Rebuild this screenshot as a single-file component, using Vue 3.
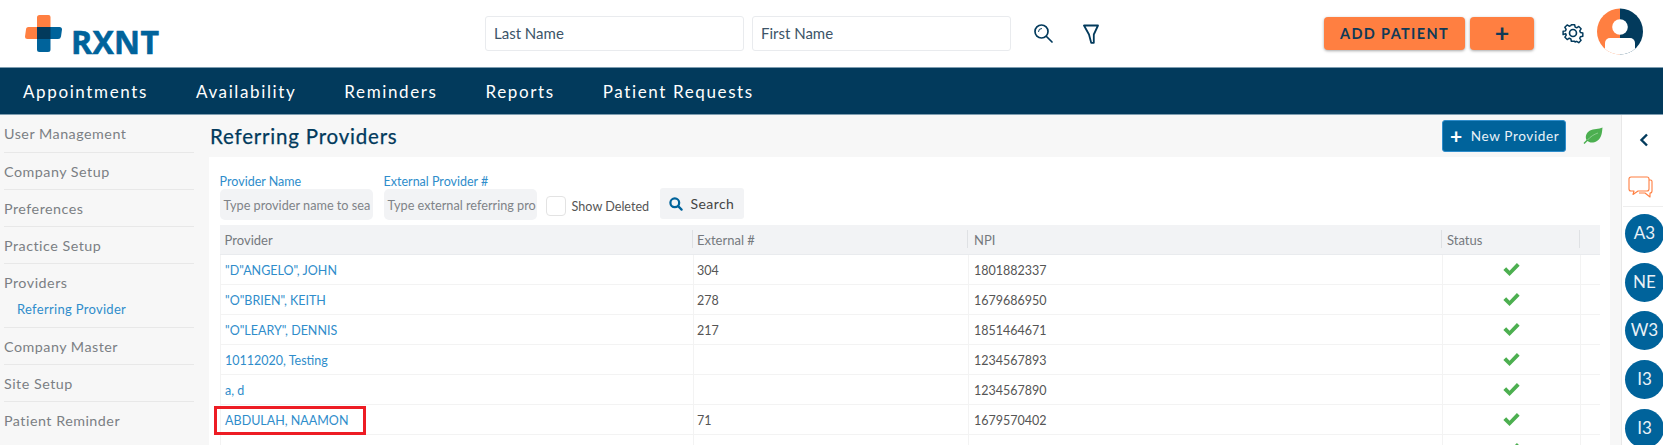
<script setup>
const navItems = [
  { label: 'Appointments', cls: 'n1' },
  { label: 'Availability', cls: 'n2' },
  { label: 'Reminders', cls: 'n2' },
  { label: 'Reports', cls: 'n2' },
  { label: 'Patient Requests', cls: 'n2' },
]
const side = ['User Management', 'Company Setup', 'Preferences', 'Practice Setup']
const side2 = ['Company Master', 'Site Setup', 'Patient Reminder']
const rows = [
  ['"D"ANGELO", JOHN', '304', '1801882337'],
  ['"O"BRIEN", KEITH', '278', '1679686950'],
  ['"O"LEARY", DENNIS', '217', '1851464671'],
  ['10112020, Testing', '', '1234567893'],
  ['a, d', '', '1234567890'],
  ['ABDULAH, NAAMON', '71', '1679570402'],
  ['', '', ''],
]
const badges = ['A3', 'NE', 'W3', 'I3', 'I3']
</script>

<template>
  <div class="page">
    <header class="top">
      <div class="logo">
        <svg width="37" height="37" viewBox="0 0 37 37">
          <path d="M12 12V2.500A2.500 2.500 0 0 1 14.500 0H23.500A2 2 0 0 1 25.500 2V24H2.500A2.500 2.500 0 0 1 0 21.500L1 14.500A2.500 2.500 0 0 1 3.500 12z" fill="#ff7f41"/>
          <path d="M12 12H34.500A2.500 2.500 0 0 1 37 14.500L36 21.500A3 3 0 0 1 33 24H25.500V34.500A2.500 2.500 0 0 1 23 37H14.500A2.500 2.500 0 0 1 12 34.500z" fill="#00639b"/>
          <path d="M12 12h13.500v12H12z" fill="#023a5c"/>
        </svg>
        <span class="logo-text">RXNT</span>
      </div>
      <div class="top-search">
        <div class="top-input">Last Name</div>
        <div class="top-input">First Name</div>
        <svg class="ic-search" width="19" height="19" viewBox="0 0 19 19" fill="none" stroke="#023a5c" stroke-width="1.700" stroke-linecap="round">
          <circle cx="7.500" cy="7.500" r="6.500"/>
          <path d="M12.500 12.500L18 18"/>
          <path d="M4.500 7.500A3 3 0 0 1 7.500 4.500" stroke-width="1"/>
        </svg>
        <svg class="ic-filter" width="16" height="20" viewBox="0 0 16 20" fill="none" stroke="#023a5c" stroke-width="1.800" stroke-linejoin="round">
          <path d="M1 1.500H15L10.800 10.500V18.800H8.200L6 10.500Z"/>
        </svg>
      </div>
      <div class="top-actions">
        <button class="orange add">ADD PATIENT</button>
        <button class="orange plus">+</button>
        <svg class="gear" width="22" height="22" viewBox="0 0 24 24" fill="none" stroke="#023a5c" stroke-width="1.800" stroke-linejoin="round">
          <path d="M10 2h4l.6 2.900 1.900.8 2.500-1.600 2.800 2.800-1.600 2.500.8 1.900 2.900.6v4l-2.900.6-.8 1.900 1.600 2.500-2.800 2.800-2.500-1.600-1.900.8L14 22h-4l-.6-2.900-1.900-.8-2.500 1.600-2.800-2.800 1.600-2.500-.8-1.900L0 14v-4l2.900-.6.8-1.900-1.600-2.500 2.800-2.800 2.500 1.600 1.900-.8z" transform="translate(1.200 1.200) scale(.9)"/>
          <circle cx="12" cy="12" r="3.800"/>
        </svg>
        <svg class="avatar" width="46" height="47" viewBox="0 0 46 47">
          <defs>
            <clipPath id="avc"><circle cx="23" cy="23.500" r="23"/></clipPath>
          </defs>
          <g clip-path="url(#avc)">
            <rect width="23" height="47" fill="#ff7f41"/>
            <rect x="23" width="23" height="47" fill="#023a5c"/>
            <circle cx="23" cy="19" r="7.800" fill="#fff"/>
            <path d="M8 47V35a5 5 0 0 1 5-5h20a5 5 0 0 1 5 5v12z" fill="#fff"/>
          </g>
        </svg>
      </div>
    </header>

    <nav class="nav">
      <a v-for="n in navItems" :key="n.label" class="nav-item" :class="n.cls">{{ n.label }}</a>
    </nav>

    <div class="body">
      <aside class="side">
        <div v-for="s in side" :key="s" class="side-item">{{ s }}</div>
        <div class="side-item group">
          <div>Providers</div>
          <div class="sub">Referring Provider</div>
        </div>
        <div v-for="s in side2" :key="s" class="side-item">{{ s }}</div>
      </aside>

      <main class="main">
        <div class="title-row">
          <h1>Referring Providers</h1>
          <button class="new-btn"><span class="new-plus">+</span>New Provider</button>
          <svg class="leaf" width="20" height="18" viewBox="0 0 20 18">
            <path d="M19.500.5C19 5 19 11 14 14 10 16.500 6 15.500 4.500 14L1.500 17 .5 16 3.500 13C2 10 3 6 7 3.500 10.500 1.500 16 2.500 19.500.5z" fill="#4caf50"/>
            <path d="M4.500 13C8 9 11 7.500 15 6" fill="none" stroke="#9ad79d" stroke-width=".8"/>
          </svg>
        </div>
        <section class="card">
          <div class="filters">
            <div class="field">
              <label>Provider Name</label>
              <div class="finput">Type provider name to sea</div>
            </div>
            <div class="field">
              <label>External Provider #</label>
              <div class="finput">Type external referring pro</div>
            </div>
            <div class="check"><span class="box"></span><span>Show Deleted</span></div>
            <button class="search-btn">
              <svg width="14" height="14" viewBox="0 0 15 15" fill="none" stroke="#00639b" stroke-width="2.400" stroke-linecap="round">
                <circle cx="6.200" cy="6.200" r="4.700"/>
                <path d="M9.800 9.800L13.500 13.500"/>
              </svg>
              Search
            </button>
          </div>
          <div class="table">
            <div class="thead">
              <div class="th">Provider</div>
              <div class="th">External #</div>
              <div class="th">NPI</div>
              <div class="th">Status</div>
              <div class="th"></div>
            </div>
            <div v-for="(r, i) in rows" :key="i" class="tr">
              <div class="td link"><span :class="{ mark: r[0].startsWith('ABD') }">{{ r[0] }}</span></div>
              <div class="td">{{ r[1] }}</div>
              <div class="td">{{ r[2] }}</div>
              <div class="td status">
                <svg width="17" height="13" viewBox="1 1 15 12">
                  <path d="M1 7.500l2.600-2.500 3.100 3.100L13.500 1 16 3.500 6.700 13z" fill="#4caf50"/>
                </svg>
              </div>
              <div class="td"></div>
            </div>
          </div>
        </section>
      </main>

      <aside class="rail">
        <div class="rail-top">
          <svg class="chev" width="10" height="14" viewBox="0 0 10 14" fill="none" stroke="#023a5c" stroke-width="2.400">
            <path d="M8 1.500L2.500 7 8 12.500"/>
          </svg>
          <svg class="chat" width="25" height="22" viewBox="0 0 25 22" fill="none" stroke="#ff7f41" stroke-width="1.100" stroke-linejoin="round">
            <path d="M19 1H3a2 2 0 0 0-2 2v10a2 2 0 0 0 2 2h3l-1 3.500L10 15h9a2 2 0 0 0 2-2V3a2 2 0 0 0-2-2z"/>
            <path d="M21 4h1.500A1.500 1.500 0 0 1 24 5.500V15a2 2 0 0 1-2 2v4l-5-4H11"/>
          </svg>
        </div>
        <div class="badges">
          <div v-for="(b, i) in badges" :key="i" class="badge">{{ b }}</div>
        </div>
      </aside>
    </div>
  </div>
</template>

<style>
html, body { margin: 0; background: #fff; overflow: hidden; }
</style>

<style scoped>
.page { width: 1663px; height: 445px; overflow: hidden; display: flex; flex-direction: column; font-family: Lato, "Open Sans", sans-serif; color: #444; }
button { font-family: inherit; border: 0; cursor: pointer; }

.top { height: 67px; flex: none; display: flex; align-items: flex-start; background: #fff; }
.logo { display: flex; align-items: flex-start; margin: 15px 0 0 25px; width: 460px; }
.logo-text { font-family: "Open Sans", sans-serif; font-weight: 700; font-size: 32px; line-height: 32px; color: #00639b; margin: 11px 0 0 9px; letter-spacing: .3px; -webkit-text-stroke: .6px #00639b; }
.top-search { display: flex; align-items: center; margin-top: 16px; gap: 8px; width: 839px; }
.top-input { width: 259px; height: 35px; box-sizing: border-box; border: 1px solid #e9ebee; border-radius: 3px; font-size: 15px; line-height: 33px; padding-left: 8px; color: #3c5468; }
.ic-search { margin-left: 15px; }
.ic-filter { margin-left: 22px; }
.top-actions { display: flex; align-items: flex-start; }
.orange { background: #ff7f41; color: #0f3a57; border-radius: 4px; height: 33px; margin-top: 17px; box-shadow: 0 1px 3px rgba(0,0,0,.35); }
.add { width: 141px; font-size: 14.500px; font-weight: 700; letter-spacing: 1.350px; padding: 0; }
.plus { width: 64px; margin-left: 5px; font-size: 25px; font-weight: 700; padding: 0 0 4px; line-height: 26px; }
.gear { margin: 22px 0 0 28px; }
.avatar { margin: 8px 0 0 13px; }

.nav { height: 48px; flex: none; box-sizing: border-box; background: #023a5c; border-top: 1px solid #7e9db0; border-bottom: 1px solid #7e9db0; display: flex; align-items: center; color: #fff; font-size: 17px; letter-spacing: 1.620px; }
.nav-item { display: block; color: #fff; }
.n1 { margin-left: 23px; }
.n2 { margin-left: 48px; }

.body { flex: 1; min-height: 0; display: flex; background: #f7f7f7; }
.side { width: 194px; flex: none; padding: 0 0 0 4px; box-sizing: border-box; }
.side-item { height: 37px; box-sizing: border-box; border-bottom: 1px solid #e8e8e8; line-height: 38px; font-size: 14.300px; color: #7b7f84; letter-spacing: .5px; }
.side-item:first-child { height: 38px; }
.side-item:last-child { border-bottom: 0; }
.group { height: 64px; line-height: 1; padding-top: 12px; }
.sub { color: #2f8dcb; font-size: 13px; margin: 13px 0 0 13px; letter-spacing: .3px; }

.main { width: 1427px; flex: none; box-sizing: border-box; padding: 0 11px 0 15px; }
.title-row { height: 42px; display: flex; align-items: flex-start; }
h1 { margin: 8px 0 0 1px; font-size: 20.500px; font-weight: 400; color: #023a5c; letter-spacing: .8px; line-height: 26px; flex: 1; -webkit-text-stroke: .25px #023a5c; }
.new-btn { width: 124px; height: 32px; margin: 5px 0 0; background: #00639b; color: #e8f1f7; border: 1px solid #2f8dcb; border-radius: 3px; font-size: 13.600px; letter-spacing: .6px; display: flex; align-items: center; padding: 0 0 0 7px; box-sizing: border-box; }
.new-plus { font-size: 21px; font-weight: 700; color: #fff; margin-right: 8px; line-height: 20px; }
.leaf { margin: 12px 7px 0 17px; }
.card { background: #fff; height: 288px; padding: 0 10px 0 10.600px; overflow: hidden; }
.filters { display: flex; align-items: flex-start; height: 68px; }
.field { width: 153px; margin-right: 11px; padding-top: 17px; }
.field label { display: block; height: 15px; font-size: 12.500px; color: #2f8dcb; line-height: 16px; }
.finput { height: 31px; background: #f2f3f5; border-radius: 5px; font-size: 12.700px; line-height: 32px; color: #7f8388; padding-left: 4px; white-space: nowrap; overflow: hidden; }
.check { display: flex; align-items: center; margin: 39px 0 0 -2px; font-size: 12.600px; color: #555; gap: 6px; width: 114px; }
.box { width: 20px; height: 20px; box-sizing: border-box; border: 1px solid #e3e3e3; border-radius: 4px; flex: none; }
.search-btn { width: 84px; height: 31px; margin-top: 31px; background: #f2f3f5; border-radius: 3px; font-size: 14px; color: #444; letter-spacing: .4px; display: flex; align-items: center; gap: 8px; padding: 0 0 0 9px; box-sizing: border-box; }

.table { width: 1380.400px; }
.thead, .tr { display: grid; grid-template-columns: 473.400px 275px 474px 138px 20px; }
.thead { height: 30px; background: #f2f3f5; border-bottom: 1px solid #e9ebee; box-sizing: border-box; }
.th { font-size: 13px; color: #75797e; padding-left: 5px; border-right: 1px solid #dfe1e4; height: 18px; margin-top: 5px; line-height: 20px; }
.th:last-child { border-right: 0; }
.th:nth-child(2) { padding-left: 4px; }
.th:nth-child(3) { padding-left: 6px; }
.tr { height: 30px; box-sizing: border-box; border-bottom: 1px solid #f3f3f3; }
.td { font-size: 12.500px; line-height: 31px; padding-left: 4px; border-left: 1px solid #f3f3f3; color: #555; height: 29px; }
.td:first-child { padding-left: 4.500px; color: #2f8dcb; }
.td:nth-child(2) { padding-left: 3px; }
.td:nth-child(3) { padding-left: 5px; }
.link { position: relative; }
.mark::after { content: ""; position: absolute; left: -7px; top: 1px; width: 152px; height: 29px; border: 3px solid #ed1c24; box-sizing: border-box; }
.status { display: flex; align-items: center; justify-content: center; padding: 0; }
.rail { width: 42px; flex: none; background: #fff; border-left: 1px solid #e8e8e8; box-sizing: border-box; overflow: hidden; }
.rail-top { height: 91px; margin-left: 1px; border-bottom: 1px solid #eee; display: flex; flex-direction: column; align-items: center; }
.chev { margin-top: 18px; margin-left: 1px; }
.chat { margin-top: 29px; margin-left: -6px; flex: none; }
.badges { padding: 7px 0 0 3px; display: flex; flex-direction: column; gap: 9.700px; }
.badge { width: 39px; height: 39px; flex: none; border-radius: 50%; background: #00639b; color: #eaf2f7; font-size: 17px; text-align: center; line-height: 38px; }
</style>
